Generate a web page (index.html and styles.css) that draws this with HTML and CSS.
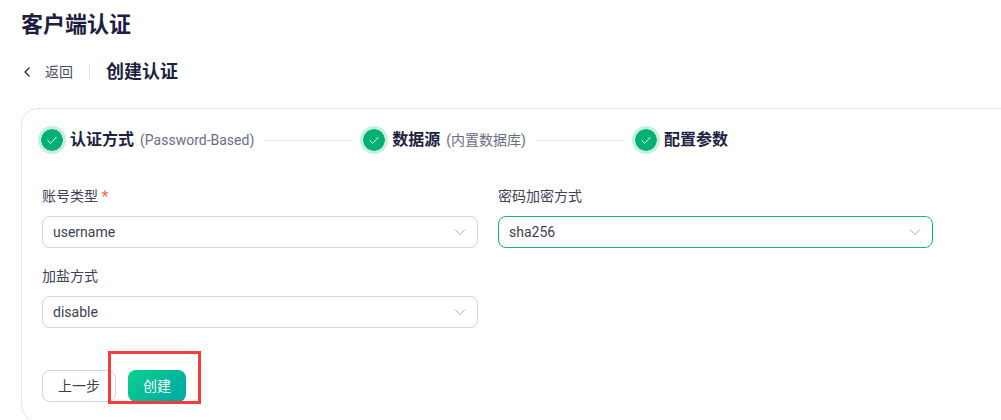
FILE: index.html
```html
<!DOCTYPE html>
<html lang="zh">
<head>
<meta charset="utf-8">
<title>创建认证</title>
<link rel="stylesheet" href="styles.css">
</head>
<body>
<div class="page">
  <h1 class="title">客户端认证</h1>
  <div class="crumb">
    <svg class="back-icon" viewBox="0 0 8 12" width="8" height="12"><path d="M6.500 1.500 2 6l4.500 4.500" fill="none" stroke="#1d1f3a" stroke-width="1.200"/></svg>
    <span class="back-text">返回</span>
    <span class="divider"></span>
    <h2 class="sub-title">创建认证</h2>
  </div>
  <div class="card">
    <div class="steps">
      <div class="step">
        <span class="dot"><svg viewBox="0 0 12 12" width="12" height="12"><path d="M1.500 6.200 4.700 9.300 10.500 3" fill="none" stroke="#fff" stroke-width="1"/></svg></span>
        <span class="step-name">认证方式</span>
        <span class="step-note">(Password-Based)</span>
      </div>
      <span class="line"></span>
      <div class="step">
        <span class="dot"><svg viewBox="0 0 12 12" width="12" height="12"><path d="M1.500 6.200 4.700 9.300 10.500 3" fill="none" stroke="#fff" stroke-width="1"/></svg></span>
        <span class="step-name">数据源</span>
        <span class="step-note">(内置数据库)</span>
      </div>
      <span class="line"></span>
      <div class="step">
        <span class="dot"><svg viewBox="0 0 12 12" width="12" height="12"><path d="M1.500 6.200 4.700 9.300 10.500 3" fill="none" stroke="#fff" stroke-width="1"/></svg></span>
        <span class="step-name">配置参数</span>
      </div>
    </div>
    <div class="form">
      <div class="field">
        <label class="label">账号类型 <em class="req">*</em></label>
        <div class="select"><span>username</span><svg class="caret" viewBox="0 0 12 8" width="12" height="8"><path d="M1 1.500 6 6.500l5-5" fill="none" stroke="#a9abb8" stroke-width="1"/></svg></div>
      </div>
      <div class="field">
        <label class="label">密码加密方式</label>
        <div class="select is-focus"><span>sha256</span><svg class="caret" viewBox="0 0 12 8" width="12" height="8"><path d="M1 1.500 6 6.500l5-5" fill="none" stroke="#a9abb8" stroke-width="1"/></svg></div>
      </div>
      <div class="field">
        <label class="label">加盐方式</label>
        <div class="select"><span>disable</span><svg class="caret" viewBox="0 0 12 8" width="12" height="8"><path d="M1 1.500 6 6.500l5-5" fill="none" stroke="#a9abb8" stroke-width="1"/></svg></div>
      </div>
    </div>
    <div class="actions">
      <button class="btn btn-plain">上一步</button>
      <button class="btn btn-primary">创建</button>
      <span class="highlight"></span>
    </div>
  </div>
</div>
</body>
</html>
```
FILE: styles.css
```css
* { box-sizing: border-box; }
html, body { margin: 0; background: #fff; }
body {
  font-family: Roboto, "Noto Sans CJK SC", sans-serif;
  color: #1d1f3a;
}
.page { width: 1001px; height: 420px; overflow: hidden; padding: 10px 0 0 21px; }
.title { margin: 0; font-size: 22px; line-height: 30px; font-weight: 700; color: #1c2141; }
.crumb { display: flex; align-items: center; height: 24px; margin-top: 20px; }
.back-icon { margin-left: 2px; }
.back-text { margin-left: 14px; font-size: 14px; color: #4a4c60; line-height: 24px; }
.divider { width: 1px; height: 14px; background: #dfe1e8; margin: 0 16px; }
.sub-title { margin: 0; font-size: 18px; font-weight: 700; line-height: 24px; color: #1c2141; }
.card {
  margin-top: 24px;
  width: 1040px;
  height: 314px;
  border: 1px solid #e3e5f0;
  border-radius: 16px;
  padding: 17px 20px 0;
}
.steps { display: flex; align-items: center; height: 28px; margin-left: -4px; }
.step { display: flex; align-items: center; }
.dot {
  width: 28px; height: 28px; border-radius: 50%;
  background: #00b173; background-clip: padding-box;
  border: 3.500px solid #c9eedf;
  display: flex; align-items: center; justify-content: center;
}
.step-name { margin-left: 4px; font-size: 16px; font-weight: 700; line-height: 24px; color: #1c2141; }
.step-note { margin-left: 6px; font-size: 14px; color: #6a6d80; line-height: 24px; }
.line { width: 88px; height: 1px; background: #e1e8ea; margin: 0 8px 0 10px; }
.form {
  display: grid;
  grid-template-columns: 436px 435px;
  column-gap: 20px;
  row-gap: 16px;
  margin-top: 30px;
}
.label { display: block; height: 24px; font-size: 14px; line-height: 24px; color: #3f4156; margin-bottom: 8px; }
.req { font-style: normal; color: #f0705f; font-size: 16px; line-height: 16px; vertical-align: -1px; }
.select {
  display: flex; align-items: center; justify-content: space-between;
  height: 32px; padding: 0 11px 0 10px;
  border: 1px solid #d3d5de; border-radius: 8px;
  font-size: 14px; color: #3c3e54;
}
.is-focus { border-color: #0bb680; }
.actions { position: relative; display: flex; gap: 12px; margin-top: 42px; }
.btn { height: 32px; border-radius: 8px; font-size: 14px; line-height: 28px; font-family: inherit; padding: 0 0 1px; }
.btn-plain { width: 74px; border: 1px solid #d3d5de; background: #fff; color: #3c3e54; }
.btn-primary { width: 58px; border: 0; color: #fff; background: linear-gradient(135deg, #0ccf8d, #00a6a6); }
.highlight {
  position: absolute; left: 66px; top: -19px;
  width: 93px; height: 53px;
  border: 3px solid #f93a3a;
}
```
